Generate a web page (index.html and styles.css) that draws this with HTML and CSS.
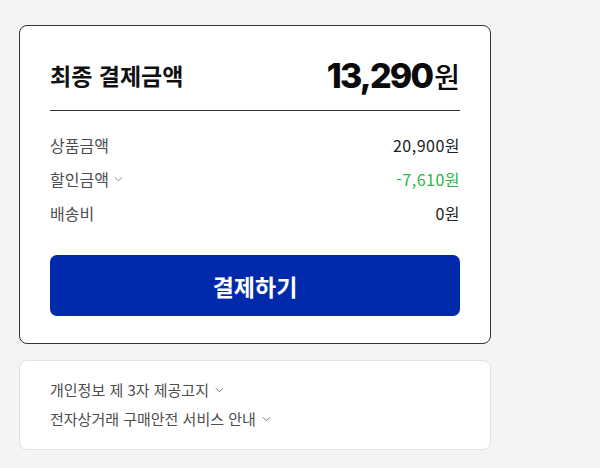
FILE: index.html
```html
<!DOCTYPE html>
<html lang="ko">
<head>
<meta charset="utf-8">
<link rel="stylesheet" href="styles.css">
</head>
<body>
<div class="wrap">
  <section class="card summary">
    <div class="head">
      <h2 class="title">최종 결제금액</h2>
      <div class="total"><span class="num">13,290</span><span class="won">원</span></div>
    </div>
    <ul class="rows">
      <li class="row"><span class="label">상품금액</span><span class="val">20,900원</span></li>
      <li class="row"><span class="label">할인금액 <svg class="chev" viewBox="0 0 10 6" width="9" height="6"><path d="M1 1l4 4 4-4" fill="none" stroke="#888" stroke-width="1.1"/></svg></span><span class="val green">-7,610원</span></li>
      <li class="row"><span class="label">배송비</span><span class="val">0원</span></li>
    </ul>
    <button class="pay">결제하기</button>
  </section>
  <section class="card notice">
    <div class="link">개인정보 제 3자 제공고지 <svg class="chev" viewBox="0 0 10 6" width="9" height="6"><path d="M1 1l4 4 4-4" fill="none" stroke="#777" stroke-width="1.1"/></svg></div>
    <div class="link">전자상거래 구매안전 서비스 안내 <svg class="chev" viewBox="0 0 10 6" width="9" height="6"><path d="M1 1l4 4 4-4" fill="none" stroke="#777" stroke-width="1.1"/></svg></div>
  </section>
</div>
</body>
</html>
```
FILE: styles.css
```css
html, body {
  margin: 0;
  padding: 0;
  background: #f4f4f4;
  font-family: "Noto Sans CJK KR", "Noto Sans", sans-serif;
}
.wrap {
  padding: 25px 0 0 19px;
  width: 472px;
  display: flex;
  flex-direction: column;
  gap: 16px;
}
.card {
  background: #fff;
  border-radius: 8px;
}
.summary {
  border: 1px solid #333;
  padding: 26px 30px 27px 30px;
}
.head {
  display: flex;
  justify-content: space-between;
  align-items: center;
  height: 46px;
  padding-bottom: 12px;
  border-bottom: 1px solid #333;
}
.title {
  margin: 0;
  font-size: 23px;
  font-weight: 700;
  color: #111;
}
.total {
  display: flex;
  align-items: baseline;
  color: #0a0a0a;
}
.num {
  font-family: "Inter", "Noto Sans", sans-serif;
  font-size: 34px;
  font-weight: 800;
  letter-spacing: -1.8px;
}
.won {
  font-size: 28px;
  font-weight: 500;
  margin-left: 2px;
}
.rows {
  list-style: none;
  margin: 17px 0 25px;
  padding: 0;
}
.row {
  display: flex;
  justify-content: space-between;
  align-items: center;
  height: 34px;
  font-size: 16px;
}
.label {
  color: #4d4d4d;
  display: flex;
  align-items: center;
  gap: 5px;
}
.val {
  color: #222;
  letter-spacing: 0.5px;
}
.green {
  color: #2db34a;
}
.pay {
  display: block;
  width: 100%;
  height: 61px;
  border: 0;
  border-radius: 7px;
  background: #0029ab;
  color: #fff;
  font-family: "Noto Sans CJK KR", "Noto Sans", sans-serif;
  font-size: 23px;
  font-weight: 700;
  cursor: pointer;
}
.notice {
  border: 1px solid #e2e2e2;
  padding: 14px 30px 16px;
}
.link {
  display: flex;
  align-items: center;
  gap: 6px;
  height: 29px;
  font-size: 15px;
  color: #4d4d4d;
}
.chev {
  display: block;
}
```
